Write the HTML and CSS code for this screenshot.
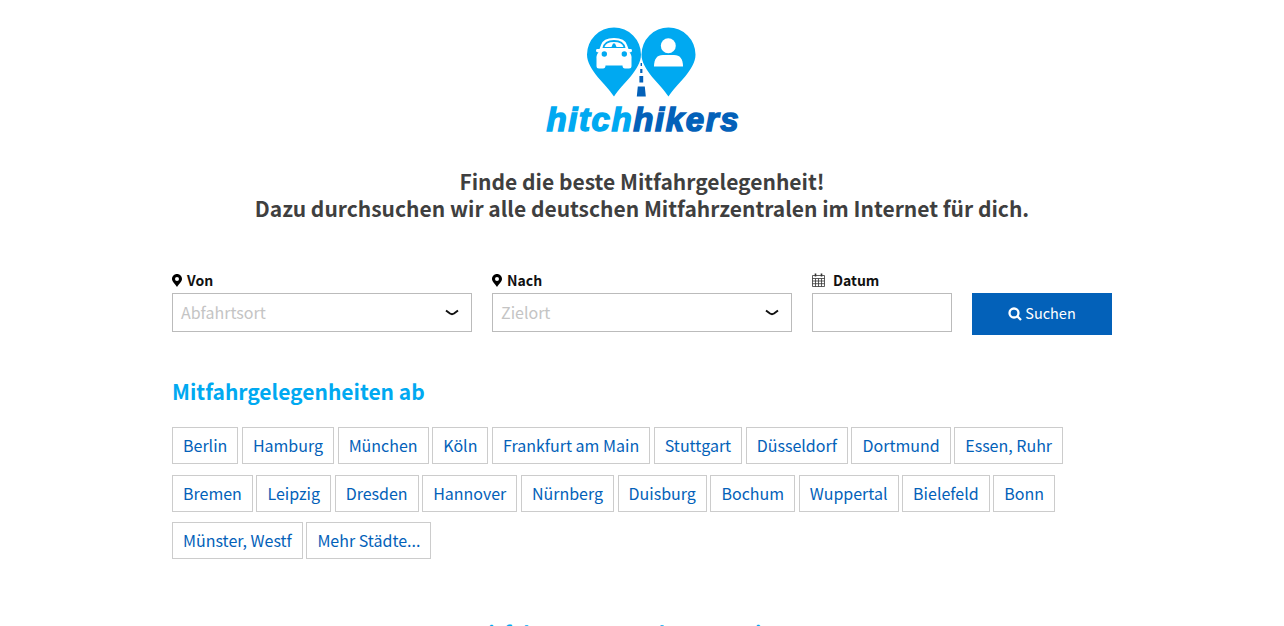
FILE: index.html
```html
<!DOCTYPE html>
<html lang="de">
<head>
    <meta charset="UTF-8">
    <title>hitchhikers</title>
    <link rel="stylesheet" href="styles.css">
</head>
<body>
    <div class="logo">
        <svg width="200" height="112" viewBox="0 0 200 112">
            <!-- car pin -->
            <path class="pin" d="M72 70.5C64 58 45 44 45 28.5A27 27 0 0 1 99 28.5C99 44 80 58 72 70.5Z"/>
            <!-- person pin -->
            <path class="pin" d="M126.5 70.5C118.5 58 99.5 44 99.5 28.5A27 27 0 0 1 153.5 28.5C153.5 44 134.5 58 126.5 70.5Z"/>
            <path class="cutout" d="M59 19Q61 12 72 12Q83 12 85 19L86.5 23H89Q90 23 90 25Q90 26 87.5 26.5Q90 29 89.5 33V40Q89.5 42.5 87 42.5H83Q80.5 42.5 80.5 39.5H63.5Q63.5 42.5 61 42.5H57Q54.5 42.5 54.5 40V33Q54 29 56.5 26.5Q54 26 54 25Q54 23 55 23H57.5Z"/>
            <path class="pin" d="M60.5 22Q62 14 72 14Q82 14 83.5 22Z"/>
            <path class="cutout" d="M62.5 21Q64 16 72 16Q80 16 81.5 21H74.5L73 17.5H71L69.5 21Z"/>
            <circle class="pin" cx="62.3" cy="28" r="2.7"/>
            <circle class="pin" cx="82.3" cy="28" r="2.7"/>
            <circle class="cutout" cx="126.3" cy="19.7" r="7.5"/>
            <path class="cutout" d="M112 40.5Q112 29 121 29H132Q141 29 141 40.5Z"/>
            <!-- road -->
            <path class="road" d="M98.6 37h1.4v3h-1.4zM98.2 43h2.2v4h-2.2zM97.4 50h3.8v6.5h-3.8zM95.8 60.5h7l1 10h-9z"/>
            <text class="logo-text" x="4.5" y="104.8"><tspan class="light">hitch</tspan><tspan class="dark">hikers</tspan></text>
        </svg>
    </div>

    <h1 class="intro">Finde die beste Mitfahrgelegenheit!<br>Dazu durchsuchen wir alle deutschen Mitfahrzentralen im Internet für dich.</h1>

    <div class="container">
        <form class="search">
            <div class="field wide">
                <label><svg class="ico" viewBox="0 0 10 13"><path fill-rule="evenodd" d="M5 0C2.2 0 0 2.2 0 5C0 7.5 3.5 10.5 5 13C6.5 10.5 10 7.5 10 5C10 2.2 7.8 0 5 0ZM5 3A2 2 0 1 1 5 7A2 2 0 1 1 5 3Z"/></svg> Von</label>
                <div class="box"><span class="placeholder">Abfahrtsort</span><svg class="chev" viewBox="0 0 14 7"><path d="M1 1.5L5 4.5Q7 5.8 9 4.5L13 1.5"/></svg></div>
            </div>
            <div class="field wide">
                <label><svg class="ico" viewBox="0 0 10 13"><path fill-rule="evenodd" d="M5 0C2.2 0 0 2.2 0 5C0 7.5 3.5 10.5 5 13C6.5 10.5 10 7.5 10 5C10 2.2 7.8 0 5 0ZM5 3A2 2 0 1 1 5 7A2 2 0 1 1 5 3Z"/></svg> Nach</label>
                <div class="box"><span class="placeholder">Zielort</span><svg class="chev" viewBox="0 0 14 7"><path d="M1 1.5L5 4.5Q7 5.8 9 4.5L13 1.5"/></svg></div>
            </div>
            <div class="field narrow">
                <label><svg class="cal" viewBox="0 0 13 14"><path d="M.5 2.5h12v11H.5zM.5 5.5h12M.5 8h12M.5 10.7h12M3.5 5.5v8M6.5 5.5v8M9.5 5.5v8"/><path class="cal-ring" d="M3.5 .5v3M9.5 .5v3"/></svg> <span class="cal-label">Datum</span></label>
                <div class="box"></div>
            </div>
            <div class="field narrow">
                <button type="button" class="btn"><svg class="mag" viewBox="0 0 14 14"><circle cx="6" cy="6" r="4.5"/><path d="M9.3 9.3L13 13"/></svg> <span class="btn-text">Suchen</span></button>
            </div>
        </form>

        <h2 class="cities-title">Mitfahrgelegenheiten ab</h2>
        <div class="cities">
            <a class="city">Berlin</a>
            <a class="city">Hamburg</a>
            <a class="city">München</a>
            <a class="city">Köln</a>
            <a class="city">Frankfurt am Main</a>
            <a class="city">Stuttgart</a>
            <a class="city">Düsseldorf</a>
            <a class="city">Dortmund</a>
            <a class="city">Essen, Ruhr</a>
            <a class="city">Bremen</a>
            <a class="city">Leipzig</a>
            <a class="city">Dresden</a>
            <a class="city">Hannover</a>
            <a class="city">Nürnberg</a>
            <a class="city">Duisburg</a>
            <a class="city">Bochum</a>
            <a class="city">Wuppertal</a>
            <a class="city">Bielefeld</a>
            <a class="city">Bonn</a>
            <a class="city">Münster, Westf</a>
            <a class="city">Mehr Städte...</a>
        </div>
    </div>

    <h2 class="next-title">Mitfahrten aus anderen Regionen</h2>
</body>
</html>
```

FILE: styles.css
```css
html, body {
    height: 626px;
    overflow: hidden;
}

body {
    margin: 0;
    background: #fff;
    color: #3a3a3a;
    font-family: "Noto Sans CJK SC", "Noto Sans", sans-serif;
}

.logo {
    display: flex;
    justify-content: center;
    padding-top: 26px;
    height: 112px;
}

.pin { fill: #00a9f1; }
.cutout { fill: #fff; }
.road { fill: #0361b9; }

.logo-text {
    font-family: "Liberation Sans", sans-serif;
    font-size: 33px;
    font-weight: bold;
    font-style: italic;
    letter-spacing: 1.6px;
    stroke-width: 1.5px;
}
.light { fill: #00a9f1; stroke: #00a9f1; }
.dark { fill: #0361b9; stroke: #0361b9; }

.intro {
    margin: 30px 0 0;
    text-align: center;
    font-size: 21px;
    line-height: 27px;
    font-weight: 600;
    color: #3f3f3f;
}

.container {
    width: 940px;
    margin: 0 auto;
}

.search {
    display: flex;
    gap: 20px;
    margin-top: 47px;
}

.wide { width: 300px; }
.narrow { width: 140px; }

.field label {
    display: flex;
    align-items: center;
    gap: 5px;
    height: 24px;
    padding-bottom: 2px;
    box-sizing: border-box;
    font-size: 14px;
    font-weight: 600;
    color: #111;
}

.ico { width: 10px; height: 13px; }

.cal {
    width: 13px;
    height: 14px;
    fill: none;
    stroke: #333;
    stroke-width: 0.8;
}
.cal-ring { stroke-width: 1.6; }
.cal-label { margin-left: 3px; }

.box {
    display: flex;
    align-items: center;
    justify-content: space-between;
    box-sizing: border-box;
    height: 39px;
    padding: 0 12px 0 8px;
    border: 1px solid #bbb;
    background: #fff;
}

.placeholder {
    font-size: 16px;
    line-height: 20px;
    margin-bottom: 2px;
    color: #c4c4c4;
}

.chev {
    width: 14px;
    height: 7px;
    fill: none;
    stroke: #111;
    stroke-width: 2;
}

.btn {
    display: flex;
    align-items: center;
    justify-content: center;
    gap: 3px;
    width: 100%;
    height: 42px;
    margin-top: 24px;
    padding: 0;
    border: 0;
    background: #0361b9;
    color: #fff;
    font-family: inherit;
    font-size: 14.5px;
}

.btn-text {
    line-height: 20px;
    margin-bottom: 2px;
}

.mag {
    width: 14px;
    height: 14px;
    fill: none;
    stroke: #fff;
    stroke-width: 2.3;
}

.cities-title {
    margin: 41px 0 0;
    font-size: 21px;
    line-height: 30px;
    font-weight: 600;
    color: #00a9f1;
}

.cities {
    display: flex;
    flex-wrap: wrap;
    gap: 10.5px 3.6px;
    margin-top: 21px;
}

.city {
    box-sizing: border-box;
    height: 37px;
    padding: 0 10px;
    border: 1px solid #ccc;
    color: #0361b9;
    font-size: 16px;
    line-height: 34px;
}

.next-title {
    margin: 59px 0 0;
    text-align: center;
    font-size: 21px;
    line-height: 30px;
    font-weight: 600;
    color: #00a9f1;
}
```
